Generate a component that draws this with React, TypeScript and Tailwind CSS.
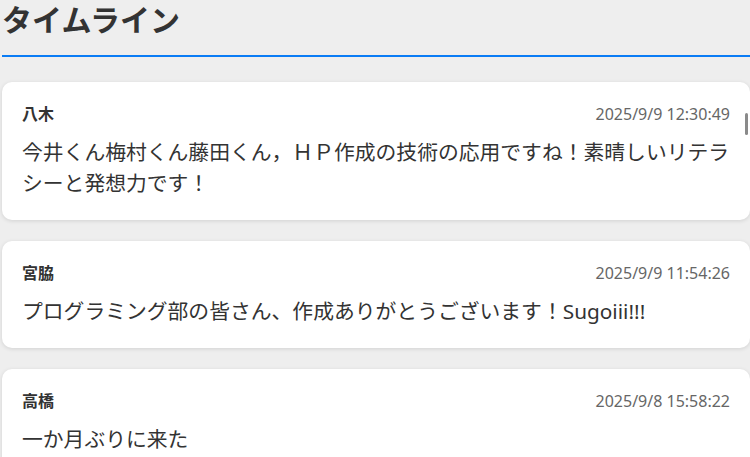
const posts = [
  {
    name: "八木",
    time: "2025/9/9 12:30:49",
    body: "今井くん梅村くん藤田くん，ＨＰ作成の技術の応用ですね！素晴しいリテラシーと発想力です！",
  },
  {
    name: "宮脇",
    time: "2025/9/9 11:54:26",
    body: "プログラミング部の皆さん、作成ありがとうございます！Sugoiii!!!",
  },
  {
    name: "高橋",
    time: "2025/9/8 15:58:22",
    body: "一か月ぶりに来た",
  },
];

export default function App() {
  return (
    <main
      className="min-h-screen bg-[#eeeeee] pl-[2px] pr-0 text-[#333333]"
      style={{ fontFamily: '"Noto Sans", "Noto Sans CJK JP", sans-serif' }}
    >
      {/* header */}
      <h1 className="border-b-2 border-[#0a7cf5] pb-[15px] text-[30px] font-bold leading-[40px] text-[#333333]">
        タイムライン
      </h1>

      {/* timeline */}
      <div className="mt-[25px] flex flex-col gap-[21px]">
        {posts.map((p, i) => (
          <div
            key={i}
            className="relative rounded-[10px] bg-white px-[20px] pt-[20px] pb-[21px] shadow-[0_1px_4px_rgba(0,0,0,0.12)]"
          >
            <div className="flex items-center justify-between">
              <span className="text-[16px] font-bold leading-[24px] text-[#333333]">{p.name}</span>
              <span className="text-[16px] leading-[24px] text-[#666666]">{p.time}</span>
            </div>
            <p className="mt-[11px] text-[20.8px] leading-[31px] text-[#333333]">{p.body}</p>
            {i === 0 && (
              <div className="absolute right-[2px] top-[31px] h-[22px] w-[3px] rounded-full bg-[#8a8a8a]" />
            )}
          </div>
        ))}
      </div>
    </main>
  );
}
